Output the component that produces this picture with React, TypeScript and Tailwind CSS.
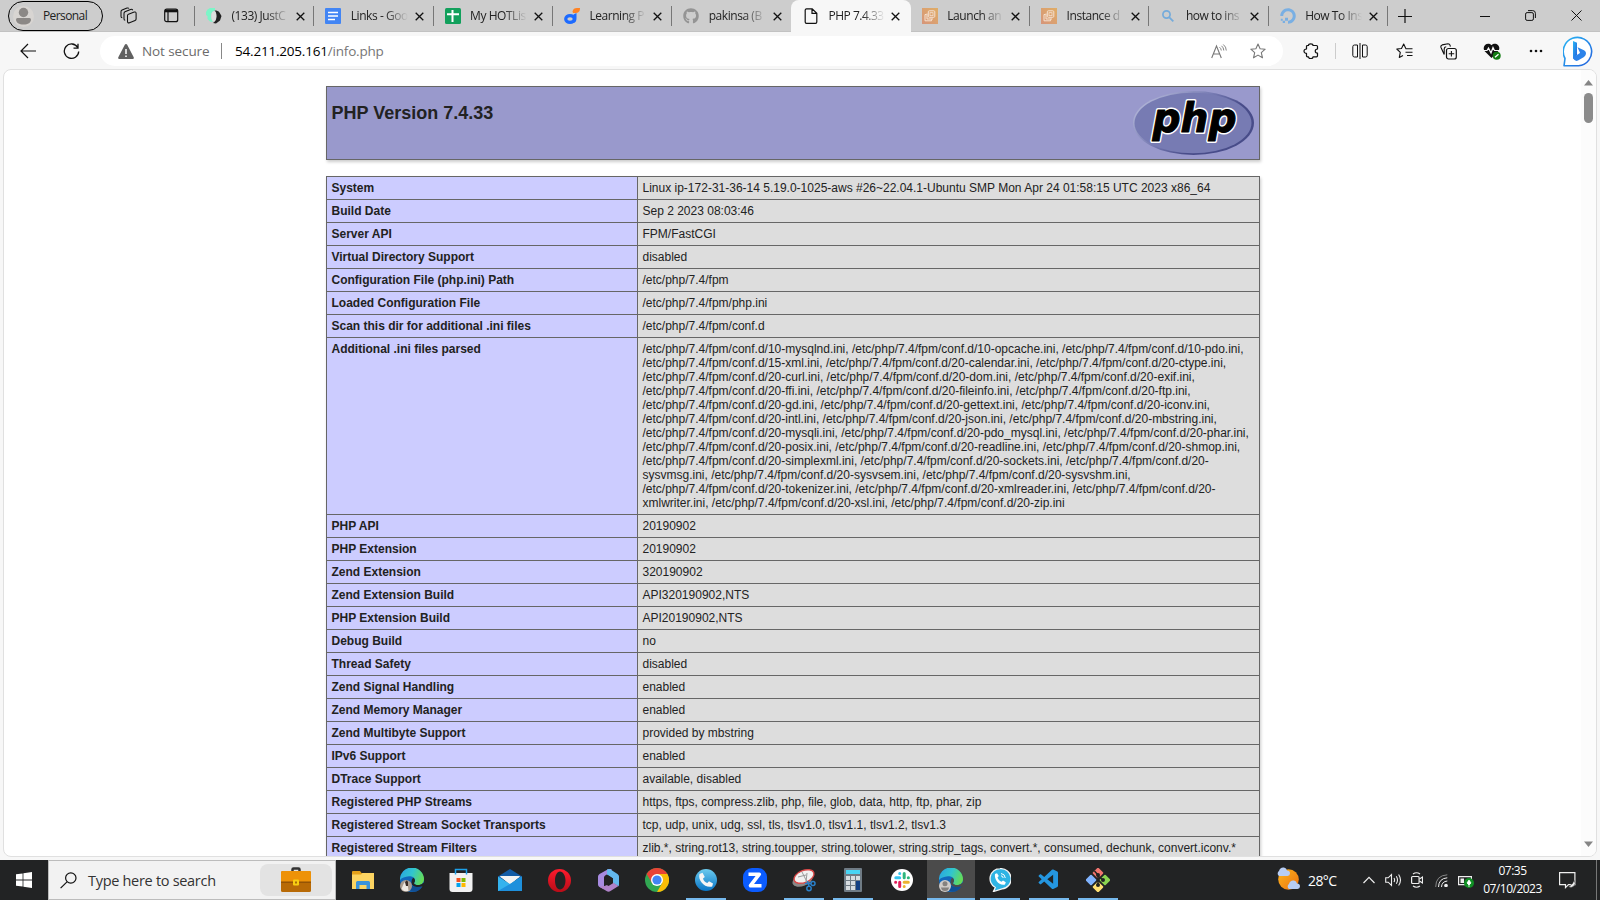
import React from "react";
import { FaGithub, FaDigitalOcean } from "react-icons/fa";
import { VscVscode } from "react-icons/vsc";

const UI = "font-['Open_Sans','Noto_Sans',sans-serif]";

type SvgProps = { w?: number; h?: number; box?: string; className?: string; children: React.ReactNode };
function Svg({ w = 16, h = 16, box, className, children }: SvgProps) {
  return (
    <svg width={w} height={h} viewBox={box ?? `0 0 ${w} ${h}`} className={`block shrink-0 ${className ?? ""}`} fill="none">
      {children}
    </svg>
  );
}

const MusicIcon = () => (
  <Svg>
    <path d="M9 0H4L1.500 1.500 0 4v3l1.500 1v3L4 13.500 7 14C5.500 12 5 10 5 7.500S6.500 3 9 2.500z" fill="#7df5c8" />
    <path d="M8.500 2.500C11 2.500 12.500 3 13.500 4.500L15.500 8l-1.500 4.500L10 15.500 7 15c2.500-1.500 3.500-4 3.500-7S9.500 3.500 8.500 2.500z" fill="#222" />
    <ellipse cx="7.800" cy="8.300" rx="2.400" ry="5" fill="#dedede" />
  </Svg>
);
const DocsIcon = () => (
  <Svg>
    <rect width="16" height="16" rx="1" fill="#4285f4" />
    <path d="M3 4.500h10M3 8h10M3 11.500h7" stroke="#fff" strokeWidth="1.600" />
  </Svg>
);
const SheetsIcon = () => (
  <Svg>
    <rect width="16" height="16" rx="1.500" fill="#12a05c" />
    <path d="M2 6.200h12M7.500 2v12" stroke="#fff" strokeWidth="2" />
  </Svg>
);
const LearnIcon = () => (
  <Svg>
    <ellipse cx="6" cy="11" rx="4.300" ry="3.400" stroke="#1d6bff" strokeWidth="3.200" />
    <path d="M9.500 6.500l3-1.500v5c0 3-1 4.500-3 5z" fill="#1d6bff" />
    <path d="M8.500 3.500C9 1 10.500 0 13 0h3c0 4-2 5.500-7 5z" fill="#ff8324" />
  </Svg>
);
const PageIcon = () => (
  <Svg w={14} h={16}>
    <path d="M2.500.8h5.700L12.800 5.200V14a1.300 1.300 0 0 1-1.300 1.300h-9A1.300 1.300 0 0 1 1.200 14V2A1.300 1.300 0 0 1 2.500.8zM8 1v4.400h4.700" stroke="#111" strokeWidth="1.200" />
  </Svg>
);
const AwsIcon = () => (
  <Svg>
    <defs>
      <linearGradient id="aws" x1="0" y1="1" x2="1" y2="0">
        <stop stopColor="#d6957a" />
        <stop offset="1" stopColor="#e0ad66" />
      </linearGradient>
    </defs>
    <rect width="16" height="16" fill="url(#aws)" />
    <rect x="6.300" y="2.800" width="6.500" height="6.500" rx="1" stroke="#f5e2d2" />
    <path d="M4.500 6.500H3v6.300h6.500v-1.500M5 5.500v5.500h6" stroke="#f5e2d2" />
    <rect x="8" y="4.700" width="3" height="3" stroke="#f5e2d2" strokeWidth=".8" />
  </Svg>
);
const BlueSearch = () => (
  <Svg>
    <circle cx="6.500" cy="6.500" r="3.600" stroke="#74abdb" strokeWidth="1.700" />
    <path d="M9.300 9.300l4 4" stroke="#74abdb" strokeWidth="1.800" />
  </Svg>
);

const tabs = [
  { t: "(133) JustC", icon: <MusicIcon /> },
  { t: "Links - Goo", icon: <DocsIcon /> },
  { t: "My HOTLis", icon: <SheetsIcon /> },
  { t: "Learning P", icon: <LearnIcon /> },
  { t: "pakinsa (B", icon: <FaGithub size={16} color="#949494" /> },
  { t: "PHP 7.4.33", icon: <PageIcon />, active: true },
  { t: "Launch an", icon: <AwsIcon /> },
  { t: "Instance d", icon: <AwsIcon /> },
  { t: "how to ins", icon: <BlueSearch /> },
  { t: "How To Ins", icon: <FaDigitalOcean size={16} color="#79afe3" /> },
];

function TabBar() {
  return (
    <div className={`flex h-8 shrink-0 items-stretch border-b border-[#c2c2c2] bg-[#cdcdcd] text-[#222] ${UI}`}>
      <div className="flex w-[194px] shrink-0 items-center">
        <div className="ml-2 mt-px flex h-[30px] w-[95px] shrink-0 items-center rounded-full border border-black pl-[4px]">
          <Svg w={21} h={21}>
            <circle cx="10.500" cy="10.500" r="10.500" fill="#d8d5d2" />
            <circle cx="10.500" cy="6.500" r="4.700" fill="#8b8886" />
            <path d="M3 13.500q0-1.500 1.500-1.500h12q1.500 0 1.500 1.500c0 3-3 5-7.500 5S3 16.500 3 13.500z" fill="#8b8886" />
          </Svg>
          <span className="ml-[9px] text-[12px] tracking-[-0.6px]">Personal</span>
        </div>
        <Svg w={18} h={18} className="ml-[17px]">
          <g stroke="#111" strokeWidth="1.050">
            <path d="M2.300 10.800Q1 10.600 1 9.300V4.700Q1 3.500 2.100 3L7 1.100q1.400-.5 2 .4" />
            <path d="M5.200 13.300Q4 13.200 4 12V6.500q0-1.200 1-1.700l5.500-2.300q1.700-.6 2.200.8" />
            <path d="M7.500 8.600q0-1 1-1.400l5.700-2.100q1.900-.6 1.900 1.200v5.700q0 1.100-1 1.500l-5.600 2.200q-2 .7-2-1.200z" fill="#cdcdcd" />
          </g>
        </Svg>
        <Svg w={15} h={15} className="ml-[26px]">
          <rect x=".7" y="1.200" width="13" height="12.500" rx="2" stroke="#111" strokeWidth="1.200" />
          <path d="M1 3h12.500" stroke="#111" strokeWidth="2.600" />
          <path d="M4 4v9.500" stroke="#111" strokeWidth="1.200" />
        </Svg>
      </div>
      {tabs.map((tab, i) => (
        <div
          key={i}
          className={
            tab.active
              ? "-mb-px flex w-[119.300px] shrink-0 items-center"
              : "flex w-[119.300px] shrink-0 items-center"
          }
        >
          {tab.active ? (
            <div className="ml-px flex h-full w-[120px] shrink-0 items-center rounded-t-lg bg-[#f7f7f7]">
              <div className="ml-[12px] flex w-4 shrink-0 items-center justify-center">{tab.icon}</div>
              <div className="ml-[9px] w-[57px] shrink-0 whitespace-nowrap text-[12px] tracking-[-0.5px] [mask-image:linear-gradient(to_right,black_60%,transparent_100%)]">
                {tab.t}
              </div>
              <Svg w={9} h={9} className="ml-[6px] mt-px">
                <path d="M.7.7l7.600 7.600M8.300.7L.7 8.300" stroke="#111" strokeWidth="1.300" />
              </Svg>
            </div>
          ) : (
            <>
              <div className={i === 6 ? "h-5 w-px shrink-0" : "h-5 w-px shrink-0 bg-[#777]"} />
              <div className="ml-[11px] flex w-4 shrink-0 items-center justify-center">{tab.icon}</div>
              <div className="ml-[9.500px] w-[57px] shrink-0 whitespace-nowrap text-[12px] tracking-[-0.45px] [mask-image:linear-gradient(to_right,black_60%,transparent_100%)]">
                {tab.t}
              </div>
              <Svg w={9} h={9} className="ml-[7px] mt-px">
                <path d="M.7.7l7.600 7.600M8.300.7L.7 8.300" stroke="#111" strokeWidth="1.300" />
              </Svg>
            </>
          )}
        </div>
      ))}
      <div className="flex flex-1 items-center">
        <div className="h-5 w-px bg-[#777]" />
        <Svg w={14} h={14} className="ml-[10px]">
          <path d="M7 0v14M0 7.500h14" stroke="#111" strokeWidth="1.200" />
        </Svg>
        <Svg w={10} h={10} className="ml-[68px]">
          <path d="M0 5.500h10" stroke="#111" />
        </Svg>
        <Svg w={11} h={11} className="ml-[35px]">
          <rect x=".6" y="2.600" width="7.800" height="7.800" rx="1.500" stroke="#111" />
          <path d="M3 .6h4.700q2.700 0 2.700 2.700V8" stroke="#111" />
        </Svg>
        <Svg w={11} h={11} className="ml-[35px]">
          <path d="M.5.5l10 10M10.500.5l-10 10" stroke="#111" />
        </Svg>
      </div>
    </div>
  );
}

const STAR = "M8 1l2.100 4.700 5.100.5-3.900 3.400 1.200 5.200L8 12.100l-4.500 2.700 1.200-5.200L.8 6.200l5.100-.5z";

function Toolbar() {
  return (
    <div className={`flex h-[38px] shrink-0 items-center bg-[#f7f7f7] ${UI}`}>
      <Svg w={17} h={16} className="ml-[20px]">
        <path d="M16 8H1M8 1L1 8l7 7" stroke="#111" strokeWidth="1.200" />
      </Svg>
      <Svg w={17} h={17} className="ml-[26px]">
        <path d="M14.700 4.500A7.200 7.200 0 1 0 15.700 8.500M15 .8v4.400h-4.500" stroke="#111" strokeWidth="1.300" />
      </Svg>
      <div className="ml-[20px] flex h-[30px] w-[1183px] items-center rounded-full bg-white">
        <Svg w={16} h={15} className="ml-[18px]">
          <path d="M8 0q.8 0 1.200.8l6.500 12.500q.6 1.700-1 1.700H1.300q-1.600 0-1-1.700L6.800.8Q7.200 0 8 0z" fill="#616161" />
          <path d="M8 5v5M8 11.500v1.600" stroke="#fff" strokeWidth="1.500" />
        </Svg>
        <span className="ml-[8px] w-[68px] whitespace-nowrap text-[13.500px] tracking-[-0.1px] text-[#6b6b6b]">Not secure</span>
        <div className="ml-[11px] h-4 w-px bg-[#888]" />
        <span className="ml-[13px] whitespace-nowrap text-[13.500px] tracking-[-0.2px] text-[#767676]">
          <span className="text-black">54.211.205.161</span>/info.php
        </span>
        <div className="flex-1" />
        <Svg w={16} h={15}>
          <path d="M.7 14L5.500 2l4.800 12M2.300 10h6.500" stroke="#777" strokeWidth="1.100" />
          <path d="M8.500 3.200q1.600 1.200 1.800 3.300M10.500 1.800q2.200 1.800 2.300 4.700M12.300.5q2.900 2.300 3 6" stroke="#777" strokeWidth=".9" />
        </Svg>
        <Svg w={16} h={16} className="ml-[23px] mr-[17px]">
          <path d={STAR} stroke="#777" strokeWidth="1.100" strokeLinejoin="round" />
        </Svg>
      </div>
      <Svg w={16} h={16} className="ml-[20px]">
        <path d="M5.500 2.500C5.500.3 10 .3 10 2.500h3.500q1 0 1 1V6c-3 0-3 4.200 0 4.200v2.600q0 1-1 1H10c0 2.500-4.500 2.500-4.500 0h-1q-1 0-1-1v-2.500C.2 10.300.2 6 3.500 6V3.500q0-1 1-1z" stroke="#111" strokeWidth="1.200" strokeLinejoin="round" />
      </Svg>
      <div className="ml-[16px] h-4 w-px bg-[#ccc]" />
      <Svg w={16} h={16} className="ml-[16px]">
        <path d="M5.500 2h-3Q.8 2 .8 3.700v8.600Q.8 14 2.500 14h3V2M10.500 2h3q1.700 0 1.700 1.700v8.600q0 1.700-1.700 1.700h-3V2M8 0v16" stroke="#111" strokeWidth="1" />
      </Svg>
      <Svg w={17} h={16} className="ml-[28px]">
        <path d="M9.800 5.500L7.700 1 5.500 5.500.8 6l3.500 3.400-1 5L7 12.400M9.500 5.800H16.500M9.500 9.200h7M11 12.500h5.500" stroke="#111" strokeWidth="1.100" strokeLinejoin="round" />
      </Svg>
      <Svg w={17} h={17} className="ml-[27px]">
        <rect x="6.500" y="5.500" width="9.800" height="10.500" rx="2" stroke="#111" strokeWidth="1.200" />
        <path d="M11.400 8v5.500M8.700 10.800h5.500M4.200 11.500L1 4.500q-.6-2 1.200-2.600L8 .8q1.600 0 2 1.300l.4 1.500M4.200 11.500V6q0-2 2-2.200" stroke="#111" strokeWidth="1.100" />
      </Svg>
      <Svg w={18} h={17} className="ml-[26px]">
        <path d="M8.500 15L1.500 8C-1.500 3 4.500-1.500 8.500 2.200 12.500-1.500 18.500 3 15.500 8z" fill="#111" />
        <path d="M0 7.500h4l1.500-2.500 2.500 5 2-5.500 1.500 3H17" stroke="#f7f7f7" strokeWidth="1.200" />
        <circle cx="13.700" cy="12.800" r="4" fill="#107c10" />
        <path d="M12 14.300l3.500-3" stroke="#fff" strokeWidth="1.300" />
      </Svg>
      <Svg w={14} h={4} className="ml-[28px]">
        <circle cx="2" cy="2" r="1.300" fill="#111" />
        <circle cx="7" cy="2" r="1.300" fill="#111" />
        <circle cx="12" cy="2" r="1.300" fill="#111" />
      </Svg>
      <Svg w={31} h={31} className="ml-[20px]">
        <defs>
          <linearGradient id="bing" x1="0" y1="0" x2="1" y2="1">
            <stop stopColor="#2ab6f4" />
            <stop offset="1" stopColor="#2360dc" />
          </linearGradient>
        </defs>
        <path d="M1 29.800l1-7.300A14.200 14.200 0 1 1 15.500 29.800z" fill="#fff" stroke="url(#bing)" strokeWidth="1.600" strokeLinejoin="round" />
        <path d="M10 5l4 1.800v12l-4 4.500z" fill="url(#bing)" />
        <path d="M10 22v-1l6-3.200 1-1-2.500-5.500 6.500 3q3 2 1.500 5l-1.500 1.700-6 3.600q-3 1.500-5-2.600z" fill="#2c83ea" />
      </Svg>
    </div>
  );
}

const P = "/etc/php/7.4/fpm/conf.d/";
const iniLines = [
  `${P}10-mysqlnd.ini, ${P}10-opcache.ini, ${P}10-pdo.ini,`,
  `${P}15-xml.ini, ${P}20-calendar.ini, ${P}20-ctype.ini,`,
  `${P}20-curl.ini, ${P}20-dom.ini, ${P}20-exif.ini,`,
  `${P}20-ffi.ini, ${P}20-fileinfo.ini, ${P}20-ftp.ini,`,
  `${P}20-gd.ini, ${P}20-gettext.ini, ${P}20-iconv.ini,`,
  `${P}20-intl.ini, ${P}20-json.ini, ${P}20-mbstring.ini,`,
  `${P}20-mysqli.ini, ${P}20-pdo_mysql.ini, ${P}20-phar.ini,`,
  `${P}20-posix.ini, ${P}20-readline.ini, ${P}20-shmop.ini,`,
  `${P}20-simplexml.ini, ${P}20-sockets.ini, ${P}20-`,
  `sysvmsg.ini, ${P}20-sysvsem.ini, ${P}20-sysvshm.ini,`,
  `${P}20-tokenizer.ini, ${P}20-xmlreader.ini, ${P}20-`,
  `xmlwriter.ini, ${P}20-xsl.ini, ${P}20-zip.ini`,
];
const rows: [string, string[]][] = [
  ["System", ["Linux ip-172-31-36-14 5.19.0-1025-aws #26~22.04.1-Ubuntu SMP Mon Apr 24 01:58:15 UTC 2023 x86_64"]],
  ["Build Date", ["Sep 2 2023 08:03:46"]],
  ["Server API", ["FPM/FastCGI"]],
  ["Virtual Directory Support", ["disabled"]],
  ["Configuration File (php.ini) Path", ["/etc/php/7.4/fpm"]],
  ["Loaded Configuration File", ["/etc/php/7.4/fpm/php.ini"]],
  ["Scan this dir for additional .ini files", ["/etc/php/7.4/fpm/conf.d"]],
  ["Additional .ini files parsed", iniLines],
  ["PHP API", ["20190902"]],
  ["PHP Extension", ["20190902"]],
  ["Zend Extension", ["320190902"]],
  ["Zend Extension Build", ["API320190902,NTS"]],
  ["PHP Extension Build", ["API20190902,NTS"]],
  ["Debug Build", ["no"]],
  ["Thread Safety", ["disabled"]],
  ["Zend Signal Handling", ["enabled"]],
  ["Zend Memory Manager", ["enabled"]],
  ["Zend Multibyte Support", ["provided by mbstring"]],
  ["IPv6 Support", ["enabled"]],
  ["DTrace Support", ["available, disabled"]],
  ["Registered PHP Streams", ["https, ftps, compress.zlib, php, file, glob, data, http, ftp, phar, zip"]],
  ["Registered Stream Socket Transports", ["tcp, udp, unix, udg, ssl, tls, tlsv1.0, tlsv1.1, tlsv1.2, tlsv1.3"]],
  ["Registered Stream Filters", ["zlib.*, string.rot13, string.toupper, string.tolower, string.strip_tags, convert.*, consumed, dechunk, convert.iconv.*"]],
];

function PhpLogo() {
  return (
    <Svg w={121} h={64}>
      <defs>
        <linearGradient id="rim" x1="0" y1="0" x2="1" y2=".6">
          <stop offset=".15" stopColor="#aeb2d5" />
          <stop offset=".5" stopColor="#777bb3" />
          <stop offset=".75" stopColor="#484c89" />
        </linearGradient>
      </defs>
      <ellipse cx="60.500" cy="32" rx="60.500" ry="32" fill="url(#rim)" />
      <ellipse cx="60" cy="32" rx="58.500" ry="30.300" fill="#777bb3" />
      <g fontFamily="DejaVu Sans" fontWeight="bold" fontStyle="italic" fontSize="41" strokeLinejoin="round">
        <text x="19.500" y="40.500" textLength="84" lengthAdjust="spacingAndGlyphs" fill="#fff" stroke="#fff" strokeWidth="4">
          php
        </text>
        <text x="19.500" y="40.500" textLength="84" lengthAdjust="spacingAndGlyphs" fill="#000" stroke="#000" strokeWidth="1.100" aria-hidden="true">
          php
        </text>
      </g>
    </Svg>
  );
}

function Page() {
  return (
    <div className="mx-[3px] flex h-[788px] shrink-0 overflow-hidden rounded-lg border border-[#e0e0e0] bg-white font-['Liberation_Sans',Arial,sans-serif] text-[12px] leading-[14px] text-[#222]">
      <div className="flex-1 pl-[322px] pt-[16px]">
        <div className="flex h-[74px] w-[934px] justify-between border border-[#666] bg-[#9999cc] py-[4px] pl-[4.500px] pr-[5px] shadow-[1px_2px_3px_#ccc]">
          <h1 className="mt-[12px] text-[18px] font-bold leading-[21px]">PHP Version 7.4.33</h1>
          <PhpLogo />
        </div>
        <div className="mt-4 w-[934px] border-l border-t border-[#666] shadow-[1px_2px_3px_#ccc]">
          {rows.map(([k, v]) => (
            <div key={k} className="flex border-b border-[#666]">
              <div className="w-[311px] shrink-0 border-r border-[#666] bg-[#ccccff] py-1 pl-[4.500px] font-bold">{k}</div>
              <div className="flex-1 whitespace-nowrap border-r border-[#666] bg-[#dddddd] py-1 pl-[4.500px]">
                {v.map((l) => (
                  <div key={l}>{l}</div>
                ))}
              </div>
            </div>
          ))}
        </div>
      </div>
      <div className="flex w-[15px] flex-col items-center bg-[#fcfcfc] pb-[9px] pt-[10px]">
        <Svg w={9} h={6}>
          <path d="M4.500 0L9 5.500H0z" fill="#858585" />
        </Svg>
        <div className="mt-[7px] h-[30px] w-[9px] rounded-full bg-[#8b8b8b]" />
        <div className="flex-1" />
        <Svg w={9} h={6}>
          <path d="M0 .5h9L4.500 6z" fill="#858585" />
        </Svg>
      </div>
    </div>
  );
}

function EdgeLogo({ badge }: { badge: "photo" | "person" }) {
  return (
    <Svg w={24} h={24}>
      <defs>
        <linearGradient id="edgeTop" x1="0" y1=".2" x2="1" y2=".5">
          <stop stopColor="#2aa5e0" />
          <stop offset=".5" stopColor="#31c5cf" />
          <stop offset="1" stopColor="#65dc55" />
        </linearGradient>
      </defs>
      <circle cx="12" cy="12" r="12" fill="#1268bd" />
      <path d="M0 12A12 12 0 0 1 24 11c0 5-4 6.500-7.500 6-2-.5-3-1.200-2-2.700C16.500 10 12 8 9 8.300 5 8.500 1.500 10 0 12z" fill="url(#edgeTop)" />
      <path d="M14.500 14.300c-1 1.500 0 2.200 2 2.700 2.500.4 5-.2 6.500-2l2 0-1.500 4c-6 1-12 0-12-4.500 0-2 .5-3.500 1.700-4.700 1.800 1 2.300 3 1.300 4.500z" fill={badge === "photo" ? "#222" : "#4b4b4b"} />
      <path d="M9.500 12c-.5 5 4 8.500 13 6.200C18 25.500 10 25 6.500 19.500c-1-3 0-6 3-7.500z" fill="#114f94" />
      {badge === "photo" ? (
        <>
          <circle cx="6" cy="18" r="6" fill="#a99c90" />
          <path d="M1.500 21l2-5 2-3 2 2 1 8H4z" fill="#eee8e2" />
          <path d="M5 14q2-3 3 0v4H6z" fill="#3b2c26" />
        </>
      ) : (
        <>
          <circle cx="6" cy="18" r="6" fill="#cfcbc8" />
          <circle cx="6" cy="15.800" r="2.500" fill="#85817e" />
          <path d="M2 19.500h8q-.5 3.500-4 3.500t-4-3.500z" fill="#85817e" />
        </>
      )}
    </Svg>
  );
}

const apps: { icon: React.ReactNode; open?: boolean; active?: boolean }[] = [
  {
    icon: (
      <Svg w={22} h={20}>
        <path d="M0 2q0-1 1-1h7l1.500 2H21q1 0 1 1v14H0z" fill="#e4a11b" />
        <path d="M0 4.500h9L10.500 3H22v16H0z" fill="#fcd462" />
        <path d="M4 19v-6.500q0-1.500 1.500-1.500h11q1.500 0 1.500 1.500V19h-3.500v-4h-7v4z" fill="#3a93db" />
      </Svg>
    ),
  },
  { icon: <EdgeLogo badge="photo" /> },
  {
    icon: (
      <Svg w={24} h={24}>
        <path d="M.5 5h23v16q0 3-3 3h-17q-3 0-3-3z" fill="#f1f1f1" />
        <path d="M6.500 6.500V1.500h11v5" stroke="#1da1ea" strokeWidth="1.500" />
        <path d="M7.500 10h4v4h-4z" fill="#f25022" />
        <path d="M12.500 10h4v4h-4z" fill="#7fba00" />
        <path d="M7.500 15h4v4h-4z" fill="#00a4ef" />
        <path d="M12.500 15h4v4h-4z" fill="#ffb900" />
      </Svg>
    ),
  },
  {
    icon: (
      <Svg w={24} h={24}>
        <path d="M0 8.500L12 1l12 7.500v4H0z" fill="#125ba5" />
        <path d="M2 8h20L12 17z" fill="#f3f3f3" />
        <path d="M0 8.500l12 7.500L24 8.500V23H0z" fill="#34b3ee" />
        <path d="M0 23l12-7L24 8.500V23z" fill="#1e90dc" />
        <path d="M1.500 8.500h21L12 15z" fill="#f3f3f3" />
      </Svg>
    ),
  },
  {
    icon: (
      <Svg w={23} h={23}>
        <defs>
          <linearGradient id="opera" x1="0" y1="0" x2="0" y2="1">
            <stop stopColor="#ff1b2d" />
            <stop offset="1" stopColor="#b70d18" />
          </linearGradient>
        </defs>
        <path fillRule="evenodd" d="M11.500 0a11.500 11.500 0 1 1 0 23 11.500 11.500 0 0 1 0-23zM12 2.500C9 2.500 7 6.500 7 11.500S9 20.500 12 20.500s5.500-4 5.500-9S15 2.500 12 2.500z" fill="url(#opera)" />
      </Svg>
    ),
  },
  {
    icon: (
      <Svg w={21} h={23}>
        <path d="M10.500 0L1.500 5Q0 6 0 7.500v8Q0 17 1.500 18l4.500 2.200V8.500q0-1.500 1.500-2.300l6-3.200V0z" fill="#a78be0" />
        <path d="M9.500 0q1.500 0 3 .5L19.500 5Q21 6 21 7.500v8q0 1-.5 1.700L15 14V9.500L9 5.500V1.500z" fill="#63b9ee" />
        <path d="M1 17.500l5.500-.5 8.500-3.500 5.500 3.500-8 5q-2 1.300-4 0z" fill="#b083c9" />
        <path d="M6.200 8.800L10.500 6.500l4.500 3v4.800L10.500 17l-4.300-2.500z" fill="#222" />
      </Svg>
    ),
  },
  {
    icon: (
      <Svg w={24} h={24}>
        <circle cx="12" cy="12" r="12" fill="#31a752" />
        <path d="M1.600 6A12 12 0 0 1 22.400 6H12L7 15z" fill="#e94335" />
        <path d="M22.400 6A12 12 0 0 1 12 24l5.200-9L12 6z" fill="#fbbc05" />
        <circle cx="12" cy="12" r="6" fill="#fff" />
        <circle cx="12" cy="12" r="4.600" fill="#4285f4" />
      </Svg>
    ),
  },
  {
    open: true,
    icon: (
      <Svg w={22} h={22}>
        <defs>
          <linearGradient id="call" x1="0" y1="0" x2="0" y2="1">
            <stop stopColor="#6ccbee" />
            <stop offset="1" stopColor="#0874c6" />
          </linearGradient>
        </defs>
        <circle cx="11" cy="11" r="11" fill="url(#call)" />
        <path d="M4.500 5l3-1.200L9.800 8 8 9.500c.5 2 2 3.500 4.300 4.500l1.700-1.700 4 2.200-.8 3C10 19.500 2.500 11.500 4.500 5z" fill="#f5f5f5" />
      </Svg>
    ),
  },
  {
    icon: (
      <Svg w={24} h={24}>
        <rect width="24" height="24" rx="9" fill="#0b5cff" />
        <path d="M5.500 6.200h10.800L7.500 17.700h11" stroke="#fff" strokeWidth="3.600" strokeLinejoin="round" />
      </Svg>
    ),
  },
  {
    open: true,
    icon: (
      <Svg w={24} h={24}>
        <ellipse cx="10.500" cy="12" rx="10.500" ry="6" fill="#888" transform="rotate(-22 10.500 12)" />
        <ellipse cx="12" cy="8.500" rx="10.500" ry="6" fill="#f1f1f1" stroke="#d84848" strokeWidth="1.400" transform="rotate(-22 12 8.500)" />
        <path d="M10 4l5 10M15 5l-1 9M6 9l8-2" stroke="#999" strokeWidth="1" />
        <circle cx="21" cy="15.500" r="2" stroke="#2a7fc9" strokeWidth="1.500" />
        <circle cx="17" cy="20.500" r="2.200" stroke="#2a7fc9" strokeWidth="1.500" />
        <path d="M13 15.500h6M15.500 13l1.500 5" stroke="#2a7fc9" strokeWidth="1.500" />
      </Svg>
    ),
  },
  {
    open: true,
    icon: (
      <Svg w={18} h={24}>
        <rect width="18" height="24" rx="1" fill="#6f7b85" />
        <rect x="2" y="2" width="14" height="4" fill="#48d4f4" />
        <path d="M2 8h4v4H2zM7 8h4v4H7zM12 8h4v4h-4zM2 13h4v4H2zM7 13h4v4H7zM2 18h4v4H2zM7 18h4v4H7z" fill="#d7dde1" />
        <path d="M12 13h4v9h-4z" fill="#123f82" />
      </Svg>
    ),
  },
  {
    icon: (
      <Svg w={22} h={22}>
        <circle cx="11" cy="11" r="11" fill="#fff" />
        <g strokeWidth="3" strokeLinecap="round">
          <path d="M8.700 4.600V4.500M4.800 8.700H8.700" stroke="#36c5f0" />
          <path d="M13.200 4.600V8.700M17.300 8.700h.1" stroke="#2eb67d" />
          <path d="M13.200 13.200h4.100M13.200 17.400v.1" stroke="#ecb22e" />
          <path d="M8.700 13.200v4.200M4.700 13.200h-.1" stroke="#e01e5a" />
        </g>
      </Svg>
    ),
  },
  { open: true, active: true, icon: <EdgeLogo badge="person" /> },
  {
    open: true,
    icon: (
      <Svg w={22} h={24}>
        <path d="M11 .7a10 10 0 0 1 2 20.200L4.500 23.500l1.800-4A10 10 0 0 1 11 .7z" fill="#2fb4e4" stroke="#f4f4f4" strokeWidth="1.300" />
        <path d="M6 6l2-.8L9.800 8 8.500 9.500c.5 1.800 2 3.300 4 4.200l1.500-1.200 2.800 1.800-.8 2.200C10 18 5 11.500 6 6z" fill="#fff" />
        <path d="M12 5.500q4 .5 4.300 4.500M12 7.800q2 .2 2.200 2.200" stroke="#fff" />
      </Svg>
    ),
  },
  {
    open: true,
    icon: (
      <div className="flex">
        <VscVscode size={24} color="#2496e0" />
      </div>
    ),
  },
  {
    open: true,
    icon: (
      <Svg w={24} h={24}>
        <rect x="8" y="1" width="8" height="8" rx="1" transform="rotate(45 12 5)" fill="#f1756f" />
        <rect x="1" y="8" width="8" height="8" rx="1" transform="rotate(45 5 12)" fill="#80b3ff" />
        <rect x="15" y="8" width="8" height="8" rx="1" transform="rotate(45 19 12)" fill="#8bd450" />
        <rect x="8" y="15" width="8" height="8" rx="1" transform="rotate(45 12 19)" fill="#ffe073" />
        <path d="M8.500 3l3.500 4v10M12 8l5 4" stroke="#222" strokeWidth="1.500" />
        <circle cx="12" cy="7" r="2" fill="#222" />
        <circle cx="17" cy="12" r="2" fill="#222" />
        <circle cx="12" cy="17" r="2" fill="#222" />
      </Svg>
    ),
  },
];

function Taskbar() {
  return (
    <div className={`flex h-10 shrink-0 items-stretch bg-[#222324] text-white ${UI}`}>
      <div className="flex w-12 items-center justify-center">
        <Svg w={16} h={16}>
          <path d="M0 2.300l6.600-.9v6.200H0zM7.400 1.200L16 0v7.600H7.400zM0 8.400h6.600v6.200L0 13.700zM7.400 8.400H16V16l-8.600-1.200z" fill="#fff" />
        </Svg>
      </div>
      <div className="flex w-[288px] shrink-0 items-center border border-[#bcbcbc] bg-[#f2f2f2] text-[#333]">
        <Svg w={17} h={17} className="ml-[11px]">
          <circle cx="10.800" cy="6" r="5.200" stroke="#111" strokeWidth="1.200" />
          <path d="M7 9.800L.6 16.200" stroke="#111" strokeWidth="1.200" />
        </Svg>
        <span className="ml-[11px] mt-[2px] w-[130px] whitespace-nowrap text-[14.500px] tracking-[-0.3px]">Type here to search</span>
        <div className="ml-auto mr-[3px] flex h-8 w-[72px] items-center justify-center rounded-lg bg-[#e3e3e3]">
          <Svg w={30} h={25} className="-mt-px">
            <path d="M11.500 4V2.500q0-1 1-1h5q1 0 1 1V4" stroke="#333" strokeWidth="2.500" />
            <rect y="4" width="30" height="21" rx="1.500" fill="#b86a06" />
            <path d="M0 5.500Q0 4 1.500 4h27Q30 4 30 5.500V15H0z" fill="#ee9208" />
            <rect y="14.500" width="30" height="1.300" fill="#8c4e05" />
            <rect x="12" y="12.500" width="6" height="6" rx="1" fill="#f8cd12" />
            <rect x="14" y="14.500" width="2" height="2" fill="#a86b08" />
          </Svg>
        </div>
      </div>
      <div className="ml-[3px] flex gap-px">
        {apps.map((a, i) => (
          <div key={i} className={a.active ? "flex w-12 flex-col items-center bg-[#4b4b4b]" : "flex w-12 flex-col items-center"}>
            <div className="flex flex-1 items-center pt-[2px]">{a.icon}</div>
            <div className={a.active ? "h-[2px] w-12 bg-[#76b9ed]" : a.open ? "h-[2px] w-10 bg-[#76b9ed]" : "h-[2px] w-10"} />
          </div>
        ))}
      </div>
      <div className="ml-auto flex items-center">
        <Svg w={25} h={23} className="-mt-[3px]">
          <defs>
            <linearGradient id="sun" x1="0" y1="0" x2="1" y2="1">
              <stop stopColor="#fcb51d" />
              <stop offset="1" stopColor="#ee7210" />
            </linearGradient>
          </defs>
          <circle cx="12.500" cy="12.500" r="10.300" fill="url(#sun)" />
          <path d="M3 9a3 3 0 0 1 0-5q1-4 5-3.500 2.500.5 3 3 3 .3 3 2.800T11.500 9zM13 22a3 3 0 0 1 0-5q1-4 5-3.500 2.500.5 3 3 3 .3 3 2.800T21.500 22z" fill="#b7cdf4" />
        </Svg>
        <span className="ml-[7px] w-[31px] whitespace-nowrap text-[14px] tracking-[-0.6px]">28°C</span>
        <Svg w={12} h={8} className="ml-[24px]">
          <path d="M.5 7L6 1.300 11.500 7" stroke="#eee" strokeWidth="1.200" />
        </Svg>
        <Svg w={17} h={14} className="ml-[10px]">
          <path d="M.7 4.800h2.500L6.500 1.500v11L3.200 9.200H.7zM9 5q1.200 2 0 4M11.300 3.200q2.400 3.800 0 7.600M13.600 1.500q3.800 5.500 0 11" stroke="#eee" strokeWidth="1.100" />
        </Svg>
        <Svg w={12} h={16} className="ml-[9px]">
          <rect x=".6" y="4.500" width="7.500" height="7" rx="1" stroke="#eee" strokeWidth="1.200" />
          <path d="M8.500 7l3-2v6l-3-2M2 2Q5.500-.5 9 2M2 14q3.500 2.500 7 0" stroke="#eee" strokeWidth="1.100" />
        </Svg>
        <Svg w={13} h={13} className="ml-[12px]">
          <path d="M.7 13Q.7 1.500 12.300.8" stroke="#888" />
          <path d="M3.500 13Q3.700 4.500 12.300 3.800M6.500 13q.3-5.500 5.800-6" stroke="#eee" />
          <circle cx="11" cy="11.500" r="1.800" fill="#eee" />
        </Svg>
        <Svg w={16} h={13} className="ml-[10px] mt-[2px]">
          <path d="M.6 1.600h12.800v8H.6z" stroke="#eee" strokeWidth="1.200" />
          <path d="M2.500 3.500H6v4.500H2.500z" fill="#eee" />
          <circle cx="11" cy="8" r="5" fill="#109024" />
          <path d="M11 5l2 3-2 2-2-2zM11 9v3" fill="#fff" stroke="#fff" strokeWidth=".8" />
        </Svg>
        <div className="ml-[6px] w-[65px] text-center text-[12px] leading-[18px] tracking-[-0.5px]">
          <div>07:35</div>
          <div>07/10/2023</div>
        </div>
        <Svg w={17} h={17} className="ml-[14px]">
          <path d="M.6.6h15.300v12H9.500l-3 3v-3H.6z" stroke="#eee" strokeWidth="1.200" />
          <path d="M15 8.500q2.500 3 0 5.500t-5.500.5q4-1.500 5.500-6z" fill="#eee" stroke="#222" strokeWidth=".5" />
        </Svg>
        <div className="ml-[20px] mr-[3px] h-10 w-px bg-[#777]" />
      </div>
    </div>
  );
}

export default function App() {
  return (
    <div className="flex h-[900px] w-[1600px] flex-col overflow-hidden bg-[#f7f7f7]">
      <TabBar />
      <Toolbar />
      <div className="-mt-px">
        <Page />
      </div>
      <div className="flex-1" />
      <Taskbar />
    </div>
  );
}
